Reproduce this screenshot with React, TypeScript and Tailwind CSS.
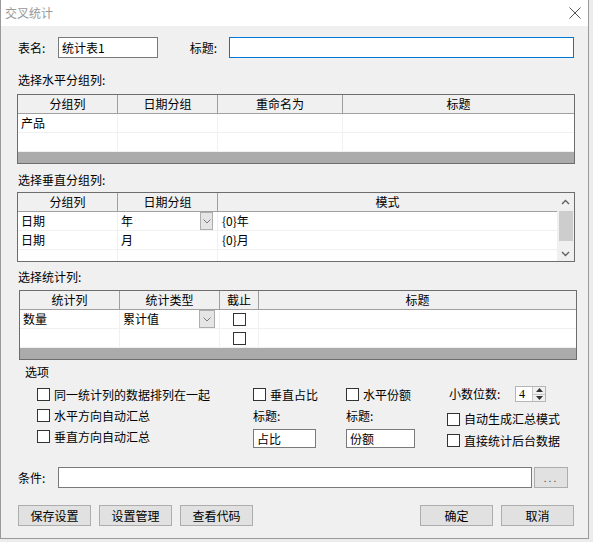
import React from 'react';

const Check = () => <span className="block w-[13px] h-[13px] border border-[#333333] bg-white shrink-0" />;

function CheckLabel({ text }: { text: string }) {
  return (
    <div className="flex items-center h-[21px]">
      <Check />
      <span className="ml-[4px] whitespace-nowrap">{text}</span>
    </div>
  );
}

function DropBtn({ w }: { w: number }) {
  return (
    <span
      className="absolute right-[4px] top-0 h-[18px] flex items-center justify-center bg-[#e5e5e5] border border-[#adadad]"
      style={{ width: w }}
    >
      <svg width="8" height="5" viewBox="0 0 8 5">
        <path d="M0.5 0.5 L4 4 L7.5 0.5" fill="none" stroke="#7a7a7a" strokeWidth="1" />
      </svg>
    </span>
  );
}

function Band() {
  return <div className="h-[11px] bg-[#ababab]" />;
}

function HorizontalTable() {
  return (
    <div className="w-[558px] border border-[#6d6d6d] bg-white">
      <div className="flex h-[19px] bg-[#f0f0f0] border-b border-[#a0a0a0]">
        <div className="w-[100px] border-r border-[#a0a0a0] text-center leading-[18px]">分组列</div>
        <div className="w-[100px] border-r border-[#a0a0a0] text-center leading-[18px]">日期分组</div>
        <div className="w-[125px] border-r border-[#a0a0a0] text-center leading-[18px]">重命名为</div>
        <div className="flex-1 text-center leading-[18px]">标题</div>
      </div>
      {['产品', ''].map((v, i) => (
        <div key={i} className="flex h-[19px] border-b border-[#f0f0f0]">
          <div className="w-[100px] border-r border-[#f0f0f0] pl-[3px] leading-[18px]">{v}</div>
          <div className="w-[100px] border-r border-[#f0f0f0]" />
          <div className="w-[125px] border-r border-[#f0f0f0]" />
          <div className="flex-1" />
        </div>
      ))}
      <Band />
    </div>
  );
}

function VerticalTable() {
  const rows = [
    ['日期', '年', '{0}年'],
    ['日期', '月', '{0}月'],
  ];
  return (
    <div className="w-[558px] h-[70px] border border-[#6d6d6d] bg-white flex">
      <div className="flex-1 overflow-hidden">
        <div className="flex h-[19px] bg-[#f0f0f0] border-b border-[#a0a0a0]">
          <div className="w-[100px] border-r border-[#a0a0a0] text-center leading-[18px]">分组列</div>
          <div className="w-[100px] border-r border-[#a0a0a0] text-center leading-[18px]">日期分组</div>
          <div className="flex-1 text-center leading-[18px]">模式</div>
        </div>
        {rows.map((r, i) => (
          <div key={i} className="flex h-[19px] border-b border-[#f0f0f0]">
            <div className="w-[100px] border-r border-[#f0f0f0] pl-[3px] leading-[18px]">{r[0]}</div>
            <div className="relative w-[100px] border-r border-[#f0f0f0] pl-[3px] leading-[18px]">
              {r[1]}
              {i === 0 && <DropBtn w={13} />}
            </div>
            <div className="flex-1 pl-[4px] leading-[18px]">{r[2]}</div>
          </div>
        ))}
        <div className="flex h-[12px]">
          <div className="w-[100px] border-r border-[#f0f0f0]" />
          <div className="w-[100px] border-r border-[#f0f0f0]" />
        </div>
      </div>
      {/* scrollbar */}
      <div className="w-[17px] bg-[#f0f0f0] flex flex-col items-center">
        <div className="h-[18px] flex items-center justify-center">
          <svg width="9" height="6" viewBox="0 0 9 6">
            <path d="M1 5 L4.5 1.5 L8 5" fill="none" stroke="#606060" strokeWidth="1.4" />
          </svg>
        </div>
        <div className="w-[14px] h-[30px] bg-[#cdcdcd]" />
        <div className="flex-1" />
        <div className="h-[14px] flex items-center justify-center">
          <svg width="9" height="6" viewBox="0 0 9 6">
            <path d="M1 1 L4.5 4.5 L8 1" fill="none" stroke="#606060" strokeWidth="1.4" />
          </svg>
        </div>
      </div>
    </div>
  );
}

function StatTable() {
  return (
    <div className="w-[558px] border border-[#6d6d6d] bg-white">
      <div className="flex h-[19px] bg-[#f0f0f0] border-b border-[#a0a0a0]">
        <div className="w-[100px] border-r border-[#a0a0a0] text-center leading-[18px]">统计列</div>
        <div className="w-[100px] border-r border-[#a0a0a0] text-center leading-[18px]">统计类型</div>
        <div className="w-[39px] border-r border-[#a0a0a0] text-center leading-[18px]">截止</div>
        <div className="flex-1 text-center leading-[18px]">标题</div>
      </div>
      {['数量', ''].map((v, i) => (
        <div key={i} className="flex h-[19px] border-b border-[#f0f0f0]">
          <div className="w-[100px] border-r border-[#f0f0f0] pl-[3px] leading-[18px]">{v}</div>
          <div className="relative w-[100px] border-r border-[#f0f0f0] pl-[3px] leading-[18px]">
            {i === 0 ? '累计值' : ''}
            {i === 0 && <DropBtn w={16} />}
          </div>
          <div className="w-[39px] border-r border-[#f0f0f0] flex items-center justify-center">
            <Check />
          </div>
          <div className="flex-1" />
        </div>
      ))}
      <Band />
    </div>
  );
}

function Btn({ text, className = '' }: { text: string; className?: string }) {
  return (
    <div className={`w-[73px] h-[21px] bg-[#e1e1e1] border border-[#adadad] flex items-center justify-center ${className}`}>
      {text}
    </div>
  );
}

export default function App() {
  return (
    <div className="w-[593px] h-[542px] bg-[#ececec] text-[12px] text-black font-['Noto_Sans_CJK_SC',sans-serif] leading-[14px]">
      <div className="w-[589px] h-[539px] border-x border-b border-[#9a9a9a] bg-[#f0f0f0] flex flex-col">
        {/* title bar */}
        <div className="h-[26px] bg-white flex items-center pl-[4px] pr-[7px] shrink-0">
          <span className="text-[#999999] text-[12px]">交叉统计</span>
          <svg className="ml-auto" width="12" height="12" viewBox="0 0 12 12">
            <path d="M0.5 0.5 L11.5 11.5 M11.5 0.5 L0.5 11.5" stroke="#555555" strokeWidth="1" />
          </svg>
        </div>

        <div className="pl-[16px] pr-[14px] flex flex-col">
          {/* table name & title */}
          <div className="mt-[11px] flex items-center h-[21px]">
            <span className="w-[41px] pl-[1px]">表名:</span>
            <div className="w-[100px] h-[21px] bg-white border border-[#7a7a7a] pl-[3px] leading-[19px]">统计表1</div>
            <span className="ml-[32px] w-[39px]">标题:</span>
            <div className="w-[346px] h-[21px] bg-white border border-[#0078d7]" />
          </div>

          <div className="mt-[15px] pl-[1px] h-[14px]">选择水平分组列:</div>
          <div className="mt-[7px]">
            <HorizontalTable />
          </div>

          <div className="mt-[9px] pl-[1px] h-[14px]">选择垂直分组列:</div>
          <div className="mt-[5px]">
            <VerticalTable />
          </div>

          <div className="mt-[8px] pl-[1px] h-[14px]">选择统计列:</div>
          <div className="mt-[6px] ml-[2px]">
            <StatTable />
          </div>

          <div className="mt-[5px] ml-[8px] h-[14px]">选项</div>

          {/* options */}
          <div className="mt-[5px] ml-[20px] h-[66px] flex">
            <div className="w-[216px] flex flex-col">
              <CheckLabel text="同一统计列的数据排列在一起" />
              <CheckLabel text="水平方向自动汇总" />
              <CheckLabel text="垂直方向自动汇总" />
            </div>
            <div className="w-[93px] flex flex-col">
              <CheckLabel text="垂直占比" />
              <div className="h-[21px] flex items-center">标题:</div>
              <div className="mt-[3px] w-[63px] h-[19px] bg-white border border-[#7a7a7a] pl-[3px] leading-[17px]">占比</div>
            </div>
            <div className="w-[101px] flex flex-col">
              <CheckLabel text="水平份额" />
              <div className="h-[21px] flex items-center">标题:</div>
              <div className="mt-[3px] w-[69px] h-[19px] bg-white border border-[#7a7a7a] pl-[3px] leading-[17px]">份额</div>
            </div>
            <div className="flex flex-col">
              <div className="mt-[2px] h-[16px] flex items-center">
                <span className="ml-[2px] w-[66px]">小数位数:</span>
                <div className="w-[31px] h-[16px] bg-white border border-[#b5b5b5] flex">
                  <span className="pl-[3px] leading-[14px] font-['Liberation_Serif',serif] text-[12px]">4</span>
                  <div className="ml-auto w-[13px] h-full flex flex-col border-l border-[#c8c8c8]">
                    <div className="flex-1 flex items-center justify-center bg-[#f0f0f0] border-b border-[#c8c8c8]">
                      <svg width="7" height="4" viewBox="0 0 7 4"><path d="M0 4 L3.5 0 L7 4 Z" fill="#333333" /></svg>
                    </div>
                    <div className="flex-1 flex items-center justify-center bg-[#f0f0f0]">
                      <svg width="7" height="4" viewBox="0 0 7 4"><path d="M0 0 L3.5 4 L7 0 Z" fill="#333333" /></svg>
                    </div>
                  </div>
                </div>
              </div>
              <div className="mt-[8px] h-[20px] flex items-center">
                <Check />
                <span className="ml-[4px] whitespace-nowrap">自动生成汇总模式</span>
              </div>
              <div className="mt-[3px] h-[20px] flex items-center">
                <Check />
                <span className="ml-[4px] whitespace-nowrap">直接统计后台数据</span>
              </div>
            </div>
          </div>

          {/* condition */}
          <div className="mt-[17px] h-[21px] flex items-center">
            <span className="w-[41px] pl-[1px]">条件:</span>
            <div className="w-[474px] h-[21px] bg-white border border-[#7a7a7a]" />
            <div className="ml-[2px] w-[34px] h-[21px] bg-[#e1e1e1] border border-[#adadad] flex items-center justify-center text-[#444444] tracking-[2px] text-[10px]">
              ...
            </div>
          </div>

          {/* buttons */}
          <div className="mt-[17px] h-[21px] flex">
            <Btn text="保存设置" className="ml-[1px]" />
            <Btn text="设置管理" className="ml-[8px]" />
            <Btn text="查看代码" className="ml-[8px]" />
            <Btn text="确定" className="ml-auto" />
            <Btn text="取消" className="ml-[8px]" />
          </div>
        </div>
      </div>
    </div>
  );
}
